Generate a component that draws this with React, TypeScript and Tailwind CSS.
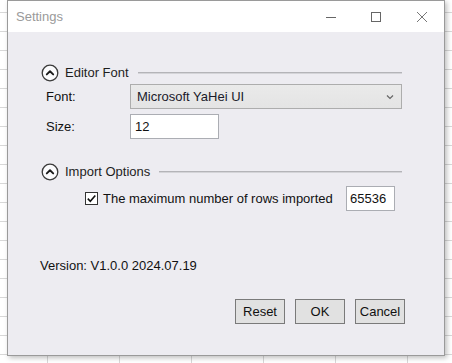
import React from "react";

const font = "font-['Liberation_Sans','Noto_Sans',sans-serif]";

function Collapse() {
  return (
    <svg width="18" height="18" viewBox="0 0 18 18" className="shrink-0">
      <circle cx="9" cy="9" r="7.8" fill="#fbfbfd" stroke="#3a3a3a" strokeWidth="1.3" />
      <path d="M5.8 10.4 L9 7.3 L12.2 10.4" fill="none" stroke="#1a1a1a" strokeWidth="1.9" strokeLinecap="round" strokeLinejoin="round" />
    </svg>
  );
}

function GroupHeader({ title }: { title: string }) {
  return (
    <div className="ml-[33px] mr-[42px] flex h-[18px] items-center">
      <Collapse />
      <span className="ml-[6px] text-[13px] leading-[18px] text-[#1e1e1e]">{title}</span>
      <div className="ml-[9px] h-[2px] flex-1 bg-[#d4d4d8] border-t border-[#b4b4b8]" />
    </div>
  );
}

export default function App() {
  return (
    <div
      className={`${font} w-[452px] h-[363px] overflow-hidden bg-white bg-[linear-gradient(to_right,#d8d8d8_1px,transparent_1px),linear-gradient(to_bottom,#d8d8d8_1px,transparent_1px)] bg-[size:72px_19px] bg-[position:47px_12px] pl-[7px]`}
    >
      <div className="flex h-[356px] w-[438px] flex-col border border-[#9a9a9a] shadow-[2px_2px_5px_rgba(0,0,0,0.25)]">
        <div className="flex h-[31px] items-center bg-white">
          <span className="ml-[8px] text-[13px] text-[#9a9a9a]">Settings</span>
          <div className="ml-auto flex items-center">
            <svg width="12" height="12" viewBox="0 0 12 12" className="mr-[33px]">
              <path d="M1 6.5 H11" stroke="#666" strokeWidth="1" />
            </svg>
            <svg width="12" height="12" viewBox="0 0 12 12" className="mr-[34px]">
              <rect x="1.5" y="1.5" width="9" height="9" fill="none" stroke="#666" strokeWidth="1" />
            </svg>
            <svg width="12" height="12" viewBox="0 0 12 12" className="mr-[16px]">
              <path d="M1 1 L11 11 M11 1 L1 11" stroke="#777" strokeWidth="1" />
            </svg>
          </div>
        </div>
        <div className="flex flex-1 flex-col whitespace-nowrap bg-[#edecf1] pt-[32px] text-[13px] text-[#111]">
          <GroupHeader title="Editor Font" />
          <div className="mt-[2px] flex items-center">
            <span className="ml-[38px] w-[84px]">Font:</span>
            <div className="flex h-[25px] w-[272px] items-center border border-[#adadad] bg-[linear-gradient(#eaeaea,#e4e4e4)] pl-[6px] pr-[7px]">
              <span className="text-[#1a1a2a]">Microsoft YaHei UI</span>
              <svg width="8" height="6" viewBox="0 0 8 6" className="ml-auto">
                <path d="M1 1.5 L4 4.5 L7 1.5" fill="none" stroke="#666" strokeWidth="1.2" />
              </svg>
            </div>
          </div>
          <div className="mt-[5px] flex items-center">
            <span className="ml-[38px] w-[84px]">Size:</span>
            <div className="flex h-[25px] w-[89px] items-center border border-[#abadb3] bg-white pl-[4px]">12</div>
          </div>
          <div className="mt-[24px]">
            <GroupHeader title="Import Options" />
          </div>
          <div className="mt-[5px] flex items-center">
            <div className="ml-[77px] flex h-[13px] w-[13px] items-center justify-center border border-[#333] bg-white">
              <svg width="11" height="11" viewBox="0 0 11 11">
                <path d="M1.8 5.6 L4.3 8.2 L9.3 2.4" fill="none" stroke="#111" strokeWidth="1.6" />
              </svg>
            </div>
            <span className="ml-[5px]">The maximum number of rows imported</span>
            <div className="ml-auto mr-[49px] flex h-[25px] w-[49px] items-center border border-[#abadb3] bg-white pl-[3px]">65536</div>
          </div>
          <div className="ml-[32px] mt-[46px] leading-[18px]">Version: V1.0.0 2024.07.19</div>
          <div className="mr-[39px] mt-[24px] flex justify-end gap-[10px]">
            {["Reset", "OK", "Cancel"].map((b) => (
              <div key={b} className="flex h-[25px] w-[50px] items-center justify-center border border-[#7a7a7a] bg-[#e1e1e1]">
                {b}
              </div>
            ))}
          </div>
        </div>
      </div>
    </div>
  );
}
